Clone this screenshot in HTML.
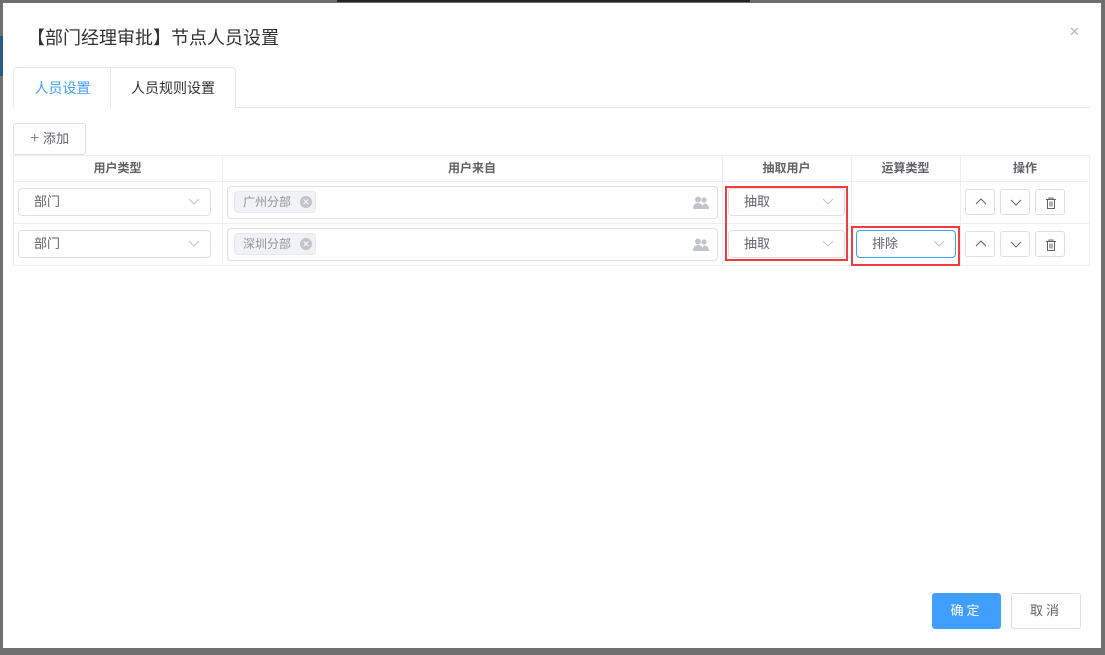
<!DOCTYPE html>
<html><head><meta charset="utf-8"><style>
*{box-sizing:border-box;margin:0;padding:0}
body{width:1105px;height:655px;background:#6f6f6f;position:relative;overflow:hidden;font-family:"Liberation Sans","Noto Sans CJK SC",sans-serif;color:#606266}
.abs{position:absolute}
.modal{left:3px;top:3px;width:1098px;height:645px;background:#fff}
.title{left:27px;top:24px;font-size:18px;color:#303133}
.close{left:1069px;top:24px;font-size:13px;color:#b4b8bf}
.tab{top:67px;height:41px;border:1px solid #e4e7ed;font-size:14px;line-height:40px;text-align:center;background:#fff}
.sel{height:28px;border:1px solid #dcdfe6;border-radius:4px;font-size:13px;line-height:26px;padding-left:15px;color:#606266;background:#fff}
.sel svg{position:absolute;right:10px;top:9px}
.th{top:155px;height:27px;font-size:12px;font-weight:bold;line-height:26px;text-align:center;color:#606266}
.vl{width:1px;background:#ebeef5;top:155px;height:111px}
.hl{height:1px;background:#ebeef5;left:13px;width:1077px}
.tag{height:22px;background:#f0f2f5;border:1px solid #e9e9eb;border-radius:4px;font-size:12px;line-height:20px;padding-left:8px;color:#909399;width:82px}
.tag i{position:absolute;left:65px;top:4px;width:12px;height:12px;border-radius:50%;background:#c0c4cc;color:#fff;font-size:9px;line-height:12px;text-align:center;font-style:normal}
.ob{width:30px;height:26px;border:1px solid #dcdfe6;border-radius:3px;background:#fff}
.ob svg{position:absolute;left:9px;top:7px}
.red{border:2px solid #f03c3c}
</style></head><body>
<div class="abs" style="left:337px;top:0;width:413px;height:2px;background:#222"></div>
<div class="abs" style="left:0;top:36px;width:3px;height:40px;background:#2a5a8a"></div>
<div class="abs modal"></div>
<div class="abs title">【部门经理审批】节点人员设置</div>
<div class="abs close">✕</div>
<div class="abs" style="left:13px;top:107px;width:1077px;height:1px;background:#e4e7ed"></div>
<div class="abs tab" style="left:13px;width:98px;color:#409eff;border-bottom-color:#fff;border-right:none;border-radius:4px 0 0 0">人员设置</div>
<div class="abs tab" style="left:110px;width:126px;color:#303133;border-radius:0 4px 0 0;border-bottom:none">人员规则设置</div>
<div class="abs" style="left:13px;top:123px;width:73px;height:32px;border:1px solid #dcdfe6;border-radius:3px;font-size:13px;line-height:30px;text-align:center;color:#606266"><span style="font-size:16px;color:#888">+</span> 添加</div>

<div class="abs" style="left:13px;top:155px;width:1077px;height:111px;border:1px solid #ebeef5"></div>
<div class="abs hl" style="top:181px"></div>
<div class="abs hl" style="top:223px"></div>
<div class="abs vl" style="left:222px"></div>
<div class="abs vl" style="left:722px"></div>
<div class="abs vl" style="left:851px"></div>
<div class="abs vl" style="left:960px"></div>
<div class="abs th" style="left:13px;width:209px">用户类型</div>
<div class="abs th" style="left:222px;width:500px">用户来自</div>
<div class="abs th" style="left:722px;width:129px">抽取用户</div>
<div class="abs th" style="left:851px;width:109px">运算类型</div>
<div class="abs th" style="left:960px;width:130px">操作</div>

<div class="abs sel" style="left:18px;top:188px;width:193px">部门<svg width="12" height="8"><path d="M1 1l5 5 5-5" stroke="#c0c4cc" fill="none"/></svg></div>
<div class="abs sel" style="left:18px;top:230px;width:193px">部门<svg width="12" height="8"><path d="M1 1l5 5 5-5" stroke="#c0c4cc" fill="none"/></svg></div>
<div class="abs sel" style="left:227px;top:186px;width:491px;height:33px"></div>
<div class="abs sel" style="left:227px;top:228px;width:491px;height:33px"></div>
<div class="abs tag" style="left:234px;top:191px">广州分部<i>✕</i></div>
<div class="abs tag" style="left:234px;top:233px">深圳分部<i>✕</i></div>
<svg class="abs" style="left:693px;top:196px" width="16" height="13"><circle cx="5" cy="3.5" r="3" fill="#c0c4cc"/><circle cx="11" cy="4" r="2.6" fill="#c0c4cc"/><path d="M0 13c0-4 2-6 5-6s5 2 5 6z" fill="#c0c4cc"/><path d="M9 13c0-3 1-5.5 3-5.5s4 2 4 5.5z" fill="#c0c4cc"/></svg>
<svg class="abs" style="left:693px;top:238px" width="16" height="13"><circle cx="5" cy="3.5" r="3" fill="#c0c4cc"/><circle cx="11" cy="4" r="2.6" fill="#c0c4cc"/><path d="M0 13c0-4 2-6 5-6s5 2 5 6z" fill="#c0c4cc"/><path d="M9 13c0-3 1-5.5 3-5.5s4 2 4 5.5z" fill="#c0c4cc"/></svg>

<div class="abs sel" style="left:728px;top:188px;width:117px">抽取<svg width="12" height="8"><path d="M1 1l5 5 5-5" stroke="#c0c4cc" fill="none"/></svg></div>
<div class="abs sel" style="left:728px;top:230px;width:117px">抽取<svg width="12" height="8"><path d="M1 1l5 5 5-5" stroke="#c0c4cc" fill="none"/></svg></div>
<div class="abs sel" style="left:856px;top:230px;width:100px;border-color:#409eff">排除<svg width="12" height="8"><path d="M1 1l5 5 5-5" stroke="#c0c4cc" fill="none"/></svg></div>
<div class="abs red" style="left:725px;top:186px;width:123px;height:75px"></div>
<div class="abs red" style="left:851px;top:226px;width:109px;height:40px"></div>

<div class="abs ob" style="left:965px;top:189px"><svg width="12" height="10"><path d="M1 7l5-5 5 5" stroke="#606266" fill="none"/></svg></div>
<div class="abs ob" style="left:1000px;top:189px"><svg width="12" height="10"><path d="M1 3l5 5 5-5" stroke="#606266" fill="none"/></svg></div>
<div class="abs ob" style="left:1035px;top:189px"><svg width="12" height="12"><path d="M1 2.5h10M4 2.5V1h4v1.5M2.5 2.5v9h7v-9M5 4.5v5M7 4.5v5" stroke="#606266" fill="none"/></svg></div>
<div class="abs ob" style="left:965px;top:231px"><svg width="12" height="10"><path d="M1 7l5-5 5 5" stroke="#606266" fill="none"/></svg></div>
<div class="abs ob" style="left:1000px;top:231px"><svg width="12" height="10"><path d="M1 3l5 5 5-5" stroke="#606266" fill="none"/></svg></div>
<div class="abs ob" style="left:1035px;top:231px"><svg width="12" height="12"><path d="M1 2.5h10M4 2.5V1h4v1.5M2.5 2.5v9h7v-9M5 4.5v5M7 4.5v5" stroke="#606266" fill="none"/></svg></div>

<div class="abs" style="left:932px;top:593px;width:69px;height:36px;background:#409eff;border-radius:3px;color:#fff;font-size:13px;line-height:36px;text-align:center;letter-spacing:3px">确定</div>
<div class="abs" style="left:1011px;top:593px;width:70px;height:36px;border:1px solid #dcdfe6;border-radius:3px;color:#606266;font-size:13px;line-height:34px;text-align:center;letter-spacing:3px">取消</div>
</body></html>
